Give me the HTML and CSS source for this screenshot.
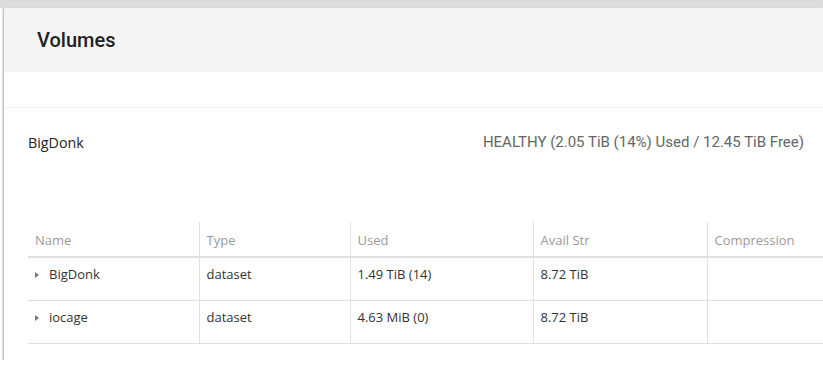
FILE: index.html
```html
<!DOCTYPE html>
<html lang="en">
<head>
  <meta charset="UTF-8">
  <title>Volumes</title>
  <link rel="stylesheet" href="styles.css">
</head>
<body>
  <div class="topbar"></div>
  <div class="frame">
    <div class="gutter"></div>
    <div class="panel">
      <header class="panel-head">
        <h1>Volumes</h1>
      </header>
      <div class="spacer"></div>
      <section class="card">
        <div class="pool">
          <span class="pool-name">BigDonk</span>
          <span class="pool-status">HEALTHY (2.05 TiB (14%) Used / 12.45 TiB Free)</span>
        </div>
        <table class="grid">
          <thead>
            <tr>
              <th class="c-name">Name</th>
              <th class="c-type">Type</th>
              <th class="c-used">Used</th>
              <th class="c-avail">Avail Str</th>
              <th class="c-comp">Compression</th>
            </tr>
          </thead>
          <tbody>
            <tr>
              <td><span class="caret"></span>BigDonk</td>
              <td>dataset</td>
              <td>1.49 TiB (14)</td>
              <td>8.72 TiB</td>
              <td></td>
            </tr>
            <tr>
              <td><span class="caret"></span>iocage</td>
              <td>dataset</td>
              <td>4.63 MiB (0)</td>
              <td>8.72 TiB</td>
              <td></td>
            </tr>
          </tbody>
        </table>
      </section>
    </div>
  </div>
</body>
</html>
```

FILE: styles.css
```css
body { margin: 0; background: #fff; font-family: "Open Sans", sans-serif; overflow: hidden; }
.topbar { height: 8px; background: linear-gradient(#dadada, #dedede); }
.frame { display: flex; }
.gutter { width: 3px; flex: none; }
.panel { flex: 1; border-left: 1px solid #c4c4c4; overflow: hidden; box-shadow: 0 1px 2px rgba(0,0,0,.35); padding-bottom: 16px; }
.panel-head { height: 64px; background: #f4f4f4; display: flex; align-items: center; padding-left: 33px; }
.panel-head h1 { margin: 0; font-family: Roboto, sans-serif; font-weight: 500; font-size: 20px; color: #222; }
.spacer { height: 35px; }
.card { border-top: 1px solid #f0f0f0; padding: 24px 0 0 24px; }
.pool { display: flex; justify-content: space-between; align-items: center; height: 20px; padding-right: 19px; }
.pool-name { font-size: 14.3px; color: #222; }
.pool-status { font-family: Roboto, sans-serif; font-size: 15px; color: #666; }
.grid { border-collapse: collapse; margin-top: 70px; table-layout: fixed; width: 879px; font-size: 13px; color: #333; }
.grid th { box-sizing: border-box; height: 35px; text-align: left; font-weight: normal; color: #9a9a9a; padding: 1px 8px 0 7px; border-bottom: 2px solid #e0e0e0; }
.grid td { height: 32px; padding: 0 8px 10px 7px; border-bottom: 1px solid #e0e0e0; }
.grid th + th, .grid td + td { border-left: 1px solid #e0e0e0; }
.c-name { width: 171px; }
.c-type { width: 151px; }
.c-used { width: 183px; }
.c-avail { width: 174px; }
.c-comp { width: 200px; }
.caret { display: inline-block; width: 0; height: 0; border-left: 4px solid #777; border-top: 3.5px solid transparent; border-bottom: 3.5px solid transparent; margin-right: 10px; vertical-align: 1px; }
```
